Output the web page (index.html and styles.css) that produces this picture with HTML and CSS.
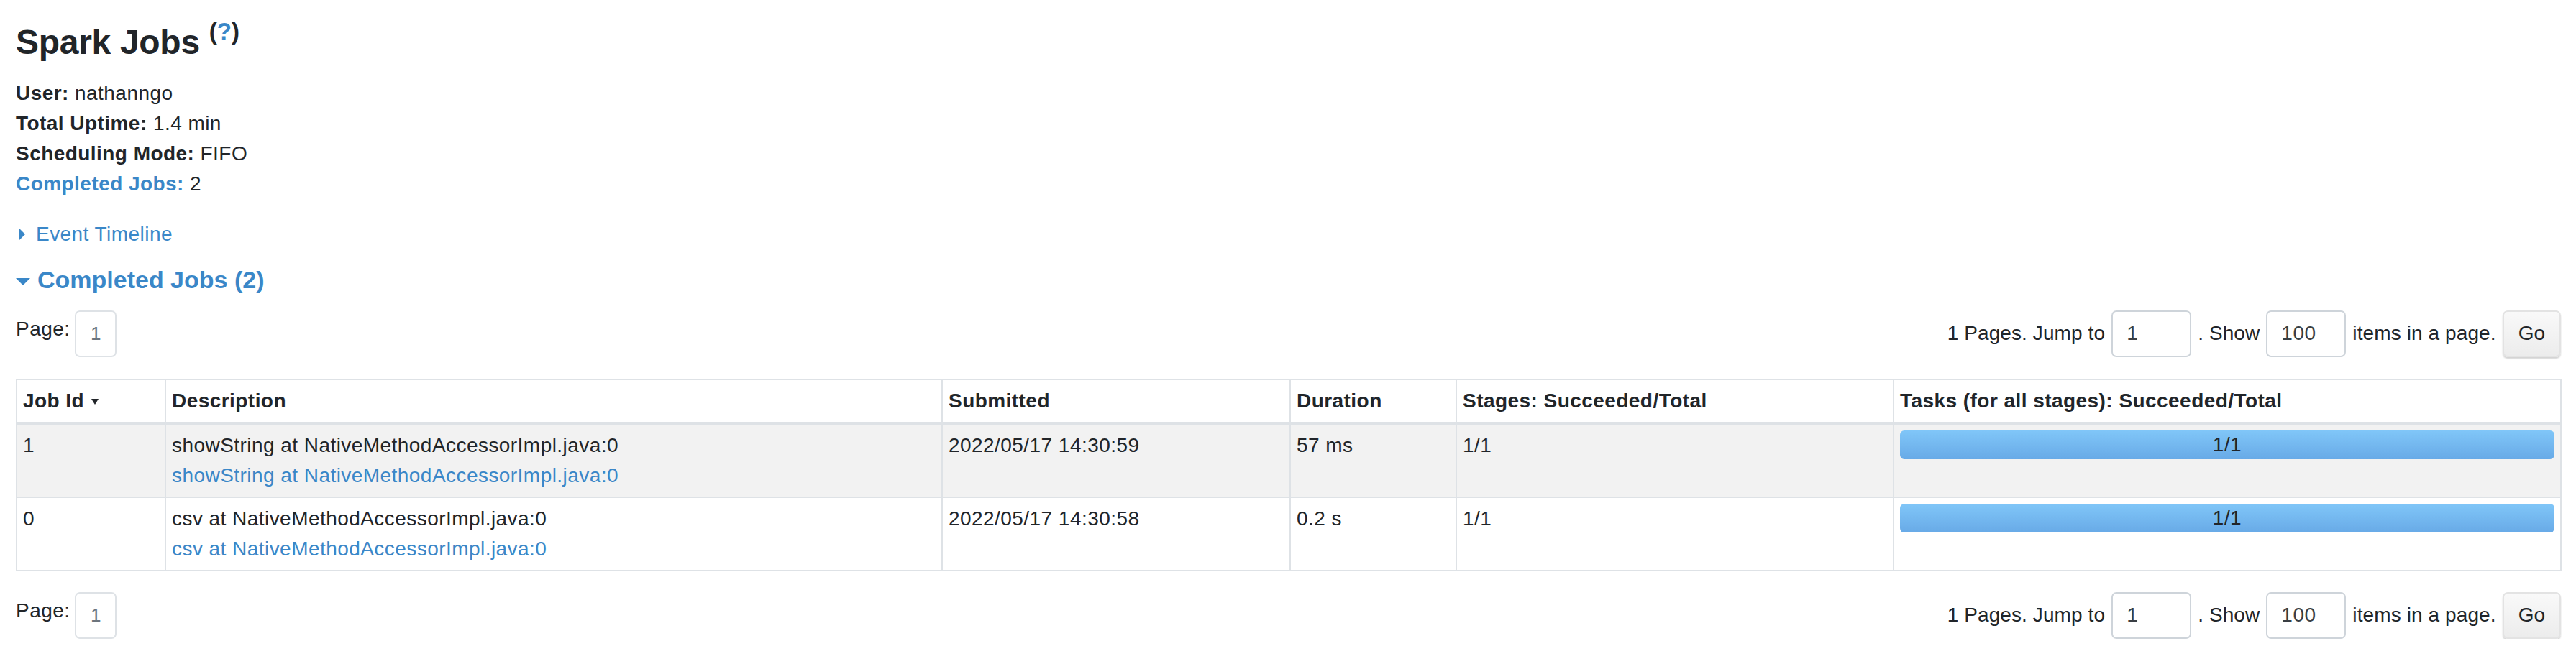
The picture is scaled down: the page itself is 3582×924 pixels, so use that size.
FILE: index.html
```html
<!DOCTYPE html>
<html lang="en">
<head>
<meta charset="utf-8">
<title>Spark Jobs</title>
<link rel="stylesheet" href="styles.css">
</head>
<body>
<div class="page">
  <h3 class="title">Spark Jobs <sup class="help">(<a href="#">?</a>)</sup></h3>
  <ul class="summary">
    <li><strong>User:</strong> nathanngo</li>
    <li><strong>Total Uptime:</strong> 1.4 min</li>
    <li><strong>Scheduling Mode:</strong> FIFO</li>
    <li><a href="#"><strong>Completed Jobs:</strong></a> 2</li>
  </ul>
  <div class="timeline-toggle">
    <span class="arrow-closed"></span>
    <a href="#">Event Timeline</a>
  </div>
  <h4 class="section-toggle"><span class="arrow-open"></span><a href="#">Completed Jobs (2)</a></h4>

  <div class="pager">
    <div class="pager-left">
      <span class="pager-label">Page:</span>
      <span class="page-box">1</span>
    </div>
    <form class="pager-right">
      <label>1 Pages. Jump to</label>
      <input class="page-input" type="text" value="1">
      <label>. Show</label>
      <input class="page-input" type="text" value="100">
      <label>items in a page.</label>
      <button class="btn-go" type="button">Go</button>
    </form>
  </div>

  <table class="jobs">
    <colgroup>
      <col class="c-id">
      <col class="c-desc">
      <col class="c-sub">
      <col class="c-dur">
      <col class="c-stages">
      <col class="c-tasks">
    </colgroup>
    <thead>
      <tr>
        <th>Job Id<span class="sort-arrow"></span></th>
        <th>Description</th>
        <th>Submitted</th>
        <th>Duration</th>
        <th>Stages: Succeeded/Total</th>
        <th>Tasks (for all stages): Succeeded/Total</th>
      </tr>
    </thead>
    <tbody>
      <tr class="odd">
        <td>1</td>
        <td>
          <div>showString at NativeMethodAccessorImpl.java:0</div>
          <a href="#">showString at NativeMethodAccessorImpl.java:0</a>
        </td>
        <td>2022/05/17 14:30:59</td>
        <td>57 ms</td>
        <td>1/1</td>
        <td><div class="progress">1/1</div></td>
      </tr>
      <tr>
        <td>0</td>
        <td>
          <div>csv at NativeMethodAccessorImpl.java:0</div>
          <a href="#">csv at NativeMethodAccessorImpl.java:0</a>
        </td>
        <td>2022/05/17 14:30:58</td>
        <td>0.2 s</td>
        <td>1/1</td>
        <td><div class="progress">1/1</div></td>
      </tr>
    </tbody>
  </table>

  <div class="pager pager-bottom">
    <div class="pager-left">
      <span class="pager-label">Page:</span>
      <span class="page-box">1</span>
    </div>
    <form class="pager-right">
      <label>1 Pages. Jump to</label>
      <input class="page-input" type="text" value="1">
      <label>. Show</label>
      <input class="page-input" type="text" value="100">
      <label>items in a page.</label>
      <button class="btn-go" type="button">Go</button>
    </form>
  </div>
</div>
</body>
</html>
```

FILE: styles.css
```css
* {
  box-sizing: border-box;
}

html,
body {
  margin: 0;
  padding: 0;
  background: #ffffff;
}

body {
  font-family: "Liberation Sans", Arial, Helvetica, sans-serif;
  font-size: 28px;
  line-height: 42px;
  letter-spacing: 0.45px;
  color: #212529;
}

a {
  color: #3a87c8;
  text-decoration: none;
}

.page {
  padding: 30px 21px 0 22px;
}

/* Title */
.title {
  margin: 0 0 20px;
  font-size: 48px;
  line-height: 58.8px;
  font-weight: 700;
  letter-spacing: -0.3px;
}

.help {
  font-size: 33px;
  position: relative;
  top: -0.6em;
  vertical-align: baseline;
  line-height: 0;
  letter-spacing: 0;
}

/* Summary */
.summary {
  list-style: none;
  margin: 0 0 28px;
  padding: 0;
}

/* Collapsible headers */
.timeline-toggle {
  display: flex;
  align-items: center;
  height: 42px;
}

.arrow-closed {
  display: inline-block;
  width: 0;
  height: 0;
  border-top: 9px solid transparent;
  border-bottom: 9px solid transparent;
  border-left: 9px solid #3a87c8;
  margin: 0 15px 0 4px;
}

.section-toggle {
  margin: 21px 0 0;
  font-size: 34px;
  line-height: 42px;
  font-weight: 700;
  letter-spacing: 0;
  display: flex;
  align-items: center;
}

.arrow-open {
  display: inline-block;
  width: 0;
  height: 0;
  border-left: 10px solid transparent;
  border-right: 10px solid transparent;
  border-top: 10px solid #3a87c8;
  margin: 6px 10px 0 0;
}

/* Pagination */
.pager {
  display: flex;
  justify-content: space-between;
  align-items: flex-start;
  margin-top: 22px;
}

.pager-bottom {
  margin-top: 29px;
}

.pager-left {
  display: flex;
  align-items: flex-start;
}

.pager-label {
  margin-top: 5px;
  margin-right: 7px;
}

.page-box {
  display: flex;
  align-items: center;
  justify-content: center;
  width: 58px;
  height: 65px;
  border: 2px solid #dee2e6;
  border-radius: 7px;
  color: #6c757d;
  font-size: 26px;
}

.pager-right {
  display: flex;
  align-items: center;
  gap: 9px;
  margin: 0;
}

.pager-right label {
  white-space: nowrap;
  letter-spacing: 0.1px;
}

.page-input {
  width: 111px;
  height: 65px;
  border: 2px solid #ced4da;
  border-radius: 7px;
  padding: 0 19px;
  font-family: inherit;
  font-size: 28px;
  letter-spacing: 0.45px;
  color: #3a3f44;
  background: #ffffff;
  outline: none;
}

.btn-go {
  height: 65px;
  padding: 0 20px;
  border: 2px solid #e3e3e3;
  border-radius: 7px;
  background: linear-gradient(#f9f9f9, #ececec);
  box-shadow: 0 2px 2px rgba(0, 0, 0, 0.18);
  font-family: inherit;
  font-size: 28px;
  color: #212529;
}

/* Table */
.jobs {
  width: 100%;
  margin-top: 30px;
  border-collapse: collapse;
  table-layout: fixed;
}

.c-id { width: 207px; }
.c-desc { width: 1080px; }
.c-sub { width: 484px; }
.c-dur { width: 231px; }
.c-stages { width: 608px; }
.c-tasks { width: 928px; }

.jobs th,
.jobs td {
  border: 2px solid #dee2e6;
  padding: 8px 8px;
  text-align: left;
  vertical-align: top;
  white-space: nowrap;
}

.jobs th {
  font-weight: 700;
  border-bottom-width: 4px;
}

.jobs tr.odd td {
  background: #f2f2f2;
}

.sort-arrow {
  display: inline-block;
  width: 0;
  height: 0;
  border-left: 5px solid transparent;
  border-right: 5px solid transparent;
  border-top: 8px solid #212529;
  margin-left: 10px;
  vertical-align: 4px;
}

.progress {
  height: 40px;
  border-radius: 6px;
  background: linear-gradient(#80c6f8, #68aae7);
  display: flex;
  align-items: center;
  justify-content: center;
  line-height: 40px;
  color: #212529;
}
```
